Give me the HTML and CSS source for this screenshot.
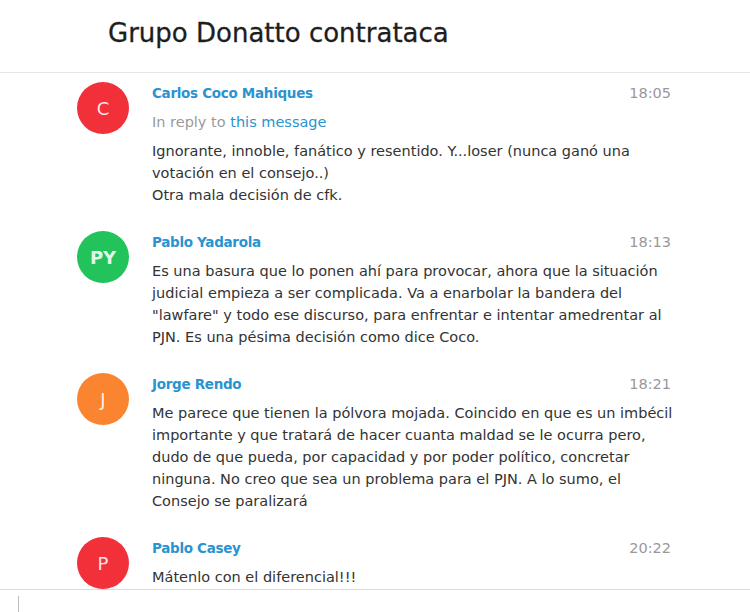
FILE: index.html
```html
<!DOCTYPE html>
<html lang="es">
<head>
<meta charset="utf-8">
<title>Grupo Donatto contrataca</title>
<link rel="stylesheet" href="styles.css">
</head>
<body>
<div class="app">
  <header class="header">
    <h1 class="title">Grupo Donatto contrataca</h1>
  </header>
  <main class="list">
    <div class="msg">
      <div class="avatar red">C</div>
      <div class="content">
        <div class="meta"><span class="name">Carlos Coco Mahiques</span><span class="time">18:05</span></div>
        <div class="reply">In reply to <span class="link">this message</span></div>
        <div class="text">Ignorante, innoble, fanático y resentido. Y...loser (nunca ganó una<br>votación en el consejo..)<br>Otra mala decisión de cfk.</div>
      </div>
    </div>
    <div class="msg">
      <div class="avatar green">PY</div>
      <div class="content">
        <div class="meta"><span class="name">Pablo Yadarola</span><span class="time">18:13</span></div>
        <div class="text">Es una basura que lo ponen ahí para provocar, ahora que la situación<br>judicial empieza a ser complicada. Va a enarbolar la bandera del<br>"lawfare" y todo ese discurso, para enfrentar e intentar amedrentar al<br>PJN. Es una pésima decisión como dice Coco.</div>
      </div>
    </div>
    <div class="msg">
      <div class="avatar orange">J</div>
      <div class="content">
        <div class="meta"><span class="name">Jorge Rendo</span><span class="time">18:21</span></div>
        <div class="text">Me parece que tienen la pólvora mojada. Coincido en que es un imbécil<br>importante y que tratará de hacer cuanta maldad se le ocurra pero,<br>dudo de que pueda, por capacidad y por poder político, concretar<br>ninguna. No creo que sea un problema para el PJN. A lo sumo, el<br>Consejo se paralizará</div>
      </div>
    </div>
    <div class="msg">
      <div class="avatar red">P</div>
      <div class="content">
        <div class="meta"><span class="name">Pablo Casey</span><span class="time">20:22</span></div>
        <div class="text">Mátenlo con el diferencial!!!</div>
      </div>
    </div>
  </main>
  <footer class="composer">
    <span class="cursor"></span>
  </footer>
</div>
</body>
</html>
```

FILE: styles.css
```css
* { box-sizing: border-box; }
html, body {
  margin: 0;
  padding: 0;
  background: #ffffff;
}
body {
  font-family: "DejaVu Sans", "Liberation Sans", sans-serif;
  color: #333333;
  width: 750px;
  height: 612px;
  overflow: hidden;
}
.app {
  display: flex;
  flex-direction: column;
  height: 612px;
}
.header {
  height: 73px;
  flex: none;
  border-bottom: 1px solid #e6e6e6;
  padding-left: 108px;
  padding-top: 15px;
}
.title {
  margin: 0;
  font-size: 26px;
  font-weight: normal;
  line-height: 36px;
  color: #1e1e1e;
  -webkit-text-stroke: 0.3px #1e1e1e;
}
.list {
  flex: 1;
  overflow: hidden;
  padding-top: 9px;
  display: flex;
  flex-direction: column;
  gap: 25px;
}
.msg {
  display: flex;
  padding-left: 77px;
  padding-right: 79px;
}
.avatar {
  flex: none;
  width: 52px;
  height: 52px;
  border-radius: 50%;
  display: flex;
  align-items: center;
  justify-content: center;
  color: rgba(255,255,255,0.88);
  font-size: 18px;
  margin-right: 23px;
}
.red { background: #f2303a; }
.green { background: #21c35a; font-weight: bold; }
.orange { background: #fb8430; }
.content {
  flex: 1;
  min-width: 0;
  font-size: 14.5px;
  line-height: 22px;
}
.meta {
  display: flex;
  justify-content: space-between;
  height: 22px;
  margin-bottom: 7px;
}
.name {
  color: #2a93d0;
  font-weight: bold;
  font-size: 13.5px;
  letter-spacing: -0.3px;
}
.time {
  color: #999999;
  font-size: 14.5px;
}
.reply {
  color: #9a9a9a;
  margin-bottom: 7px;
}
.link { color: #2a93d0; }
.text {
  color: #333333;
  white-space: nowrap;
}
.composer {
  height: 23px;
  flex: none;
  border-top: 1px solid #dcdcdc;
  padding-left: 18px;
  padding-top: 6px;
}
.cursor {
  display: block;
  width: 1px;
  height: 17px;
  background: #bdbdbd;
}
```
